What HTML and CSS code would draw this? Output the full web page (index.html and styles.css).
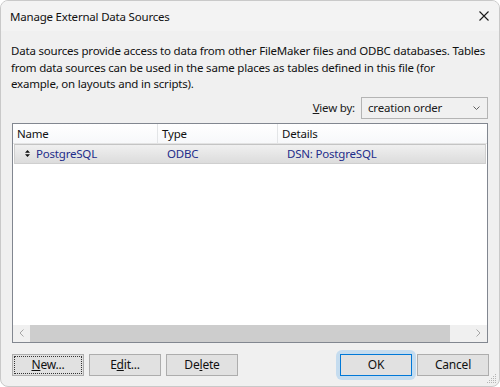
FILE: index.html
```html
<!DOCTYPE html>
<html lang="en">
<head>
  <meta charset="UTF-8">
  <title>Manage External Data Sources</title>
  <link rel="stylesheet" href="styles.css">
</head>
<body>
  <div class="window">
    <div class="titlebar">
      <span class="title">Manage External Data Sources</span>
      <svg class="close" width="10" height="10" viewBox="0 0 10 10">
        <path d="M0.5 0.5L9.5 9.5M9.5 0.5L0.5 9.5" stroke="#1a1a1a" stroke-width="1.1" fill="none"/>
      </svg>
    </div>

    <div class="content">
      <p class="intro">Data sources provide access to data from other FileMaker files and ODBC databases. Tables from data sources can be used in the same places as tables defined in this file (for<br>example, on layouts and in scripts).</p>

      <div class="viewby">
        <span class="viewby-label"><u>V</u>iew by:</span>
        <div class="select">
          <span>creation order</span>
          <svg width="7" height="4" viewBox="0 0 7 4">
            <path d="M0.5 0.5L3.5 3.5L6.5 0.5" stroke="#606060" fill="none"/>
          </svg>
        </div>
      </div>

      <div class="list">
        <div class="list-head">
          <div class="col col-name">Name</div>
          <div class="col col-type">Type</div>
          <div class="col col-details">Details</div>
        </div>
        <div class="list-row">
          <div class="col col-name">
            <svg class="sort" width="5" height="7" viewBox="0 0 5 7">
              <path d="M2.5 0L5 2.8H0Z M2.5 7L5 4.2H0Z" fill="#111"/>
            </svg>
            PostgreSQL
          </div>
          <div class="col col-type">ODBC</div>
          <div class="col col-details">DSN: PostgreSQL</div>
        </div>
        <div class="list-fill"></div>
        <div class="hscroll">
          <div class="arrow">
            <svg width="5" height="8" viewBox="0 0 5 8"><path d="M4.5 0.5L1 4L4.5 7.5" stroke="#a6a6a6" fill="none"/></svg>
          </div>
          <div class="thumb"></div>
          <div class="track"></div>
          <div class="arrow">
            <svg width="5" height="8" viewBox="0 0 5 8"><path d="M0.5 0.5L4 4L0.5 7.5" stroke="#a6a6a6" fill="none"/></svg>
          </div>
        </div>
      </div>

      <div class="buttons">
        <div class="btn-group">
          <button class="btn focused"><u>N</u>ew...</button>
          <button class="btn">E<u>d</u>it...</button>
          <button class="btn">De<u>l</u>ete</button>
        </div>
        <div class="btn-group">
          <span class="default-ring"><button class="btn btn-default">OK</button></span>
          <button class="btn">Cancel</button>
        </div>
      </div>
    </div>

    <svg class="grip" width="10" height="10" viewBox="0 0 10 10">
      <g fill="#b4b4b4">
        <rect x="8" y="0" width="1" height="1"/>
        <rect x="6" y="2" width="1" height="1"/><rect x="8" y="2" width="1" height="1"/>
        <rect x="4" y="4" width="1" height="1"/><rect x="6" y="4" width="1" height="1"/><rect x="8" y="4" width="1" height="1"/>
        <rect x="2" y="6" width="1" height="1"/><rect x="4" y="6" width="1" height="1"/><rect x="6" y="6" width="1" height="1"/><rect x="8" y="6" width="1" height="1"/>
        <rect x="0" y="8" width="1" height="1"/><rect x="2" y="8" width="1" height="1"/><rect x="4" y="8" width="1" height="1"/><rect x="6" y="8" width="1" height="1"/><rect x="8" y="8" width="1" height="1"/>
      </g>
    </svg>
  </div>
</body>
</html>
```

FILE: styles.css
```css
* {
  box-sizing: border-box;
}
body {
  margin: 0;
  background: #ffffff;
  font-family: "Noto Sans", "Open Sans", sans-serif;
  font-size: 11.5px;
  letter-spacing: -0.2px;
  color: #1a1a1a;
}
.window {
  position: relative;
  width: 500px;
  height: 387px;
  border: 1px solid #c9c9c9;
  border-radius: 8px;
  background: #f0f0f0;
  overflow: hidden;
  display: flex;
  flex-direction: column;
}
.titlebar {
  height: 30px;
  flex: none;
  background: #f3f3f3;
  display: flex;
  align-items: center;
  justify-content: space-between;
  padding: 0 10px 0 9px;
}
.title {
  color: #111;
}
.content {
  flex: 1;
  display: flex;
  flex-direction: column;
  padding: 12px 10px 13px 10px;
}
.intro {
  margin: 0;
  line-height: 16.5px;
  color: #111;
}
.viewby {
  display: flex;
  justify-content: flex-end;
  align-items: center;
  gap: 6px;
  margin-top: 4px;
  padding-right: 1px;
}
.select {
  width: 127px;
  height: 22px;
  border: 1px solid #b4b4b4;
  background: #f0f0f0;
  display: flex;
  align-items: center;
  justify-content: space-between;
  padding: 0 7px 0 6px;
}
.list {
  margin: 4px 1px 0 1px;
  height: 220px;
  border: 1px solid #828790;
  background: #ffffff;
  display: flex;
  flex-direction: column;
}
.list-head {
  height: 20px;
  display: flex;
  background: linear-gradient(#ffffff, #f7f8fa);
  border-bottom: 1px solid #e3e3e3;
}
.list-head .col {
  border-right: 1px solid #e3e5e7;
  display: flex;
  align-items: center;
  padding-left: 4px;
  color: #111;
}
.col-name {
  width: 145px;
}
.col-type {
  width: 120px;
}
.col-details {
  flex: 1;
}
.list-head .col-details {
  border-right: none;
}
.list-row {
  height: 20px;
  margin: 0 1px;
  display: flex;
  background: linear-gradient(#f0f0f0, #dcdcdc);
  border: 1px solid #cfcfcf;
  border-top-color: #c4c4c4;
  color: #232d8a;
}
.list-row .col {
  display: flex;
  align-items: center;
}
.list-row .col-name {
  width: 144px;
  padding-left: 10px;
  gap: 6px;
}
.list-row .col-type {
  padding-left: 8px;
}
.list-row .col-details {
  padding-left: 8px;
}
.list-fill {
  flex: 1;
}
.hscroll {
  height: 17px;
  display: flex;
  background: #f0f0f0;
}
.hscroll .arrow {
  width: 17px;
  display: flex;
  align-items: center;
  justify-content: center;
}
.thumb {
  width: 420px;
  background: #cdcdcd;
}
.track {
  flex: 1;
}
.buttons {
  margin-top: 11px;
  padding-left: 1px;
  display: flex;
  justify-content: space-between;
}
.btn-group {
  display: flex;
  gap: 5px;
  align-items: center;
}
.btn {
  width: 72px;
  height: 22px;
  margin: 0;
  padding: 0;
  border: 1px solid #adadad;
  background: #e1e1e1;
  font-family: inherit;
  font-size: 12px;
  letter-spacing: -0.2px;
  color: #111;
}
.btn.focused {
  border: 1px solid #adadad;
  outline: 1px dotted #333;
  outline-offset: -3px;
}
.btn-default {
  border: 1px solid #0078d7;
  display: block;
}
.default-ring {
  display: block;
  padding: 4px;
  margin: -4px;
  border-radius: 6px;
  background: #c5dcef;
}
.grip {
  position: absolute;
  right: 2px;
  bottom: 2px;
}
```
